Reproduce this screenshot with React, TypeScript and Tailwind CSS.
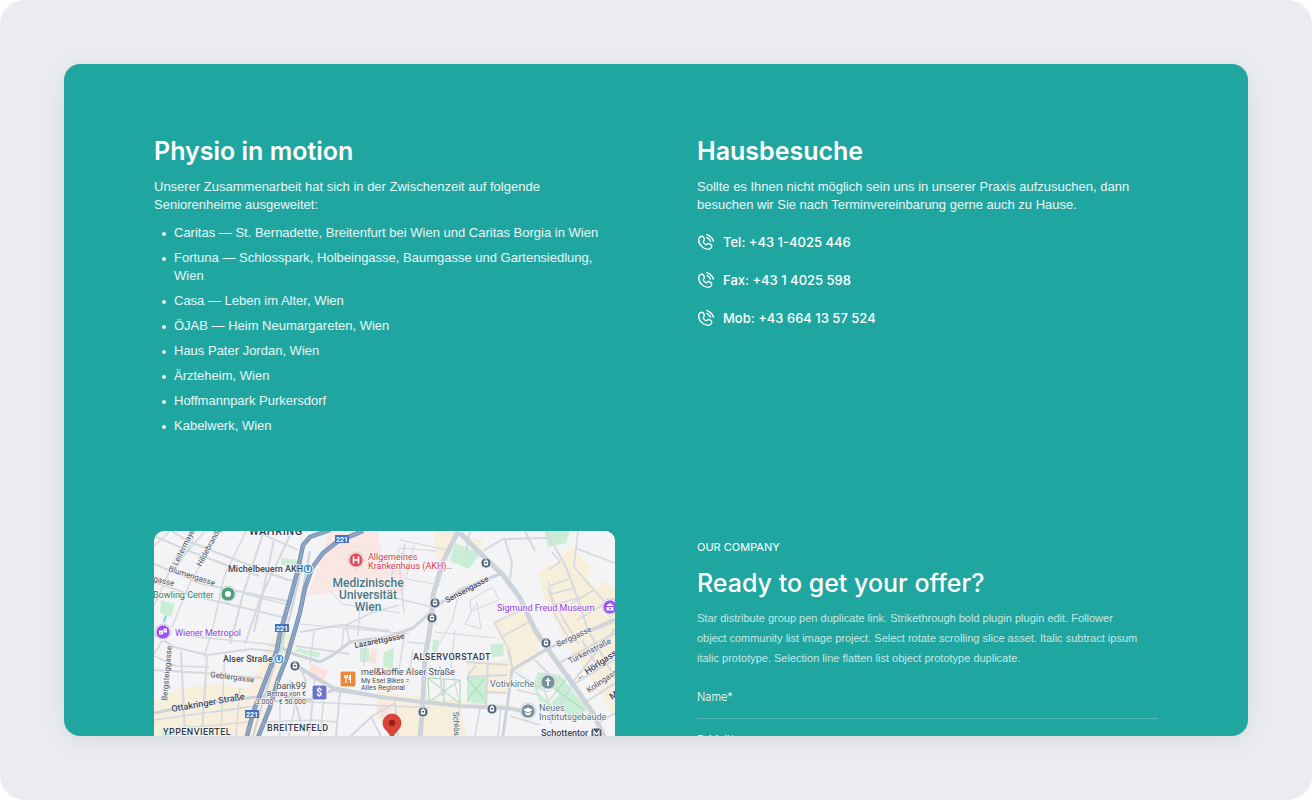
import type { ReactNode } from "react";

const homes = [
  "Caritas — St. Bernadette, Breitenfurt bei Wien und Caritas Borgia in Wien",
  "Fortuna — Schlosspark, Holbeingasse, Baumgasse und Gartensiedlung, Wien",
  "Casa — Leben im Alter, Wien",
  "ÖJAB — Heim Neumargareten, Wien",
  "Haus Pater Jordan, Wien",
  "Ärzteheim, Wien",
  "Hoffmannpark Purkersdorf",
  "Kabelwerk, Wien",
];

const phones = [
  { label: "Tel: +43 1-4025 446", href: "tel:+4314025446" },
  { label: "Fax: +43 1 4025 598", href: "tel:+4314025598" },
  { label: "Mob: +43 664 13 57 524", href: "tel:+436641357524" },
];

const fields = [
  { id: "name", label: "Name*", type: "text" },
  { id: "email", label: "E-Mail*", type: "email" },
];

function PhoneIcon() {
  return (
    <svg viewBox="2 0 22 22" className="size-[18px] shrink-0" fill="none" stroke="currentColor" strokeWidth="1.7" strokeLinecap="round" aria-hidden="true">
      <path d="M14 2s2.2.2 5 3 3 5 3 5M14.2 5.5s1 .3 2.5 1.8 1.8 2.5 1.8 2.5" />
      <path d="M10.04 5.32l.65 1.16c.58 1.05.35 2.43-.57 3.35 0 0-1.12 1.12.91 3.15 2.03 2.03 3.15.91 3.15.91.92-.92 2.3-1.16 3.35-.57l1.16.65c1.58.88 1.77 3.1.38 4.5-.84.83-1.87 1.48-3 1.53-1.9.07-5.15-.41-8.4-3.66-3.25-3.25-3.73-6.5-3.66-8.4.05-1.13.7-2.16 1.53-3 1.4-1.39 3.62-1.2 4.5.38z" />
    </svg>
  );
}

type MapLabel = {
  text: string;
  x: number;
  y: number;
  size: number;
  fill: string;
  rotate?: number;
  weight?: number;
  anchor?: "start" | "middle" | "end";
};

const SLATE = "#46536a";
const DARK = "#3d4656";
const PURPLE = "#8b44e0";

const mapLabels: MapLabel[] = [
  { text: "Leitermayergasse", x: 177, y: 566, size: 8, fill: SLATE, rotate: -63 },
  { text: "Hildebrandgasse", x: 201, y: 567, size: 8, fill: SLATE, rotate: -62 },
  { text: "Blumengasse", x: 168, y: 571, size: 8, fill: SLATE, rotate: 18 },
  { text: "gasse", x: 153, y: 581, size: 8, fill: SLATE, rotate: 14 },
  { text: "Michelbeuern AKH", x: 228, y: 572, size: 9, fill: DARK, weight: 500 },
  { text: "Bowling Center", x: 153, y: 598, size: 9, fill: "#31845c" },
  { text: "Wiener Metropol", x: 175, y: 636, size: 9, fill: PURPLE },
  { text: "Alser Straße", x: 223, y: 662, size: 9, fill: DARK, weight: 500 },
  { text: "Geblergasse", x: 210, y: 677, size: 8, fill: SLATE, rotate: 7 },
  { text: "Bergsteiggasse", x: 167, y: 701, size: 8, fill: SLATE, rotate: -85 },
  { text: "Ottakringer Straße", x: 172, y: 712, size: 9, fill: DARK, rotate: -10, weight: 500 },
  { text: "bank99", x: 306, y: 689, size: 9, fill: "#4d4d52", anchor: "end" },
  { text: "Betrag von €", x: 306, y: 696, size: 7, fill: "#4d4d52", anchor: "end" },
  { text: "3.000 - € 50.000", x: 306, y: 704, size: 7, fill: "#4d4d52", anchor: "end" },
  { text: "Allgemeines", x: 368, y: 560, size: 9, fill: "#d6404a" },
  { text: "Krankenhaus (AKH)…", x: 368, y: 569, size: 9, fill: "#d6404a" },
  { text: "Medizinische", x: 368, y: 587, size: 12, fill: "#4c7583", anchor: "middle", weight: 500 },
  { text: "Universität", x: 368, y: 599, size: 12, fill: "#4c7583", anchor: "middle", weight: 500 },
  { text: "Wien", x: 368, y: 611, size: 12, fill: "#4c7583", anchor: "middle", weight: 500 },
  { text: "Lazarettgasse", x: 355, y: 648, size: 8, fill: DARK, rotate: -11, weight: 500 },
  { text: "Sensengasse", x: 447, y: 603, size: 8, fill: DARK, rotate: -28, weight: 500 },
  { text: "mel&koffie Alser Straße", x: 361, y: 675, size: 9, fill: "#4d4d52" },
  { text: "My Esel Bikes =", x: 361, y: 683, size: 7, fill: "#4d4d52" },
  { text: "Alles Regional", x: 361, y: 690, size: 7, fill: "#4d4d52" },
  { text: "Sigmund Freud Museum", x: 497, y: 611, size: 9, fill: PURPLE },
  { text: "Votivkirche", x: 490, y: 687, size: 9, fill: "#58737c" },
  { text: "Neues", x: 539, y: 711, size: 9, fill: "#58737c" },
  { text: "Institutsgebäude", x: 539, y: 720, size: 9, fill: "#58737c" },
  { text: "Schottentor", x: 541, y: 736, size: 9, fill: DARK, weight: 500 },
  { text: "Berggasse", x: 558, y: 647, size: 8, fill: SLATE, rotate: -25 },
  { text: "Türkenstraße", x: 570, y: 664, size: 8, fill: SLATE, rotate: -27 },
  { text: "← Hörlgasse", x: 578, y: 681, size: 9, fill: DARK, rotate: -34, weight: 500 },
  { text: "Kolingasse", x: 589, y: 693, size: 8, fill: SLATE, rotate: -34 },
  { text: "Maria", x: 612, y: 700, size: 9, fill: DARK, rotate: -34, weight: 500 },
  { text: "Schlösselgasse", x: 453, y: 712, size: 8, fill: SLATE, rotate: 87 },
];

const districtLabels = [
  { text: "WÄHRING", x: 249, y: 535, size: 11 },
  { text: "ALSERVORSTADT", x: 413, y: 660, size: 9 },
  { text: "YPPENVIERTEL", x: 163, y: 735, size: 9 },
  { text: "BREITENFELD", x: 267, y: 731, size: 9 },
];

function Pin({ x, y, color, children }: { x: number; y: number; color: string; children?: ReactNode }) {
  return (
    <g transform={`translate(${x} ${y})`}>
      <path d="M-8 0a8 8 0 1 1 16 0c0 5-5 5.500-8 10-3-4.500-8-5-8-10z" fill="#fff" stroke="#b4bac3" strokeWidth=".7" />
      <circle r="6.700" fill={color} />
      {children}
    </g>
  );
}

function TramStop({ x, y }: { x: number; y: number }) {
  return (
    <g transform={`translate(${x} ${y})`}>
      <circle r="5" fill="#4d6076" stroke="#eef1f4" strokeWidth=".8" />
      <path d="M-1.200-3.200h2.400" stroke="#fff" strokeWidth=".8" />
      <rect x="-2.200" y="-2.400" width="4.400" height="5" rx=".8" fill="#fff" />
      <path d="M-1.200-1h2.400v1.500h-2.400z" fill="#4d6076" />
    </g>
  );
}

function RouteShield({ x, y }: { x: number; y: number }) {
  return (
    <g transform={`translate(${x} ${y})`}>
      <rect x="-7" y="-4" width="14" height="8" fill="#426fc0" />
      <text y="2.500" textAnchor="middle" fontSize="7" fontWeight="700" fill="#fff">221</text>
    </g>
  );
}

function CityMap() {
  return (
    <svg viewBox="154 531 461 340" className="block w-full" fontFamily="Roboto, sans-serif" role="img" aria-label="Karte der Praxis">
      <rect x="154" y="531" width="461" height="340" fill="#f4f3f5" />

      {/* built-up areas */}
      <g fill="#f8eedc">
        <path d="M154 702l26-14 31-4 38 4 29-60 14 6-38 112h-100z" />
        <path d="M434 531h25l-14 30-9-4z" />
        <path d="M463 537l20 3-3 13-12-7z" />
        <path d="M378 692l77 8 58 5v171h-114l-5-135-18-25z" />
        <path d="M467 662l44-2 24-12 8 6-30 20-9 22-37-4z" />
        <path d="M494 621l32-14 17 30-8 13-24 20-6-20z" />
        <path d="M556 562l16-15 9 10 20 22 14 9v130l-8-12-42-65-21-44-6-24z" />
      </g>
      <path d="M565 531h50v53l-20-9-14-21zM590 567l15 7-6 15-12-10z" fill="#f4f3f5" />
      <path d="M460 708h52l30 6 20 22v20h-90z" fill="#f4f3f5" />
      <path d="M330 531h48l3 24 26 18-4 21-39-7-57 9 10-26z" fill="#fae6e3" />
      <path d="M310 663l18 8-5 12-14-4zM377 706l13-3 4 18-13-3zM370 649l7-1-1 16-7-1z" fill="#fae3df" />

      {/* parks */}
      <g fill="#caeed5">
        <path d="M281 558l17 2-1 8-16-3z" />
        <path d="M161 600l14 4-4 13-11-4z" />
        <path d="M282 632l4-1-3 23-6-2z" />
        <path d="M455 543l25 10-11 16-19-8z" />
        <path d="M544 531h26l-4 12-18 4z" />
        <path d="M302 649l18 4-1 5-19-5zM301 647l-7 4 8 2z" />
        <path d="M360 648h9v14h-9z" />
        <path d="M384 652l10-4-1 22-10-4z" />
        <path d="M433 640h6l-2 14-5-3z" />
        <path d="M490 645l13-2 1 13-12 1z" />
        <path d="M467 677l19-1v28l-19-2z" />
        <path d="M538 672l22 3 28 35-14 7-35-16-6-17z" />
        <path d="M435 612l2 14-5-5z" />
        <path d="M161 730l28-5 4 8-30 4z" />
      </g>
      <path d="M537 691l12-9 10 13-9 9z" fill="#f4f3f5" />
      <path d="M428 678l32 2v25l-31-4zl31 25M460 680l-31 22M444 679v24M467 678l18 22M485 678l-18 22M540 678l44 32M570 674l-22 28" fill="none" stroke="#9fd7b2" strokeWidth="1" />
      <path d="M163 621l2-6 2 1-2 7z" fill="#8fd5e8" />

      {/* minor streets */}
      <g fill="none" stroke="#d4d9df" strokeWidth="1.500">
        <path d="M154 536l35 15 40 15 30 10M172 531l14 9 32 13 70 27" strokeWidth="2" />
        <path d="M154 564l48 20 50 10 40 8M154 582l40 14 38 9 58 14" strokeWidth="2" />
        <path d="M220 531l-30 52-18 44M205 531l-36 42-15 33M246 531l-22 46-11 50-9 30" />
        <path d="M264 531l-20 60-14 53M274 540l-9 42-11 50M292 531l-32 68-15 45" strokeWidth="2" />
        <path d="M154 546l16-15M180 550l-14 28M257 570l38 12M245 594l47 12M258 532l40 18M193 540l-18 30" />
        <path d="M154 634l20 13 33 8 45-6 27 3M207 655l-5 80M181 652l4 84M154 670l48 3 60 5" strokeWidth="2" />
        <path d="M154 656l22 10 33 1M170 628l-16 26M225 653l-4 77M154 720l100-14M154 740l30-12 65-6" />
        <path d="M188 636l80 8 14 5M240 688l-4 48M214 712l35-5" />
        <path d="M300 632l42-7 48 6M296 646l54 8M290 680l12 48M299 664l8 20M315 679l-6 57M340 692l-4 44" strokeWidth="2" />
        <path d="M270 700l160 8M262 722l50-2 25 2M280 702v34M296 700l-7 36M325 688l-5 48" />
        <path d="M349 738l22-21 24-14 3 33M371 717l10 19" strokeWidth="2" />
        <path d="M350 643l-4-18 25-12 28-8M360 604l-2 32M404 613l-4-42 5-27M378 594l54 13" />
        <path d="M300 624l110 10M330 590l12 14 58 9M391 578l8-30 37 3M400 540l47 10M414 545l-8 34 35 6" strokeWidth="1" />
        <path d="M314 630l-4 34M344 628l-2 18M366 637l-2 29M405 632l-7 44M378 669l52 4M407 642l22 2M413 650l-4 26" />
        <path d="M460 588l-8 34-17 28M470 600l23-13 6 13-28 11zM465 624l12-22 4 27zM435 632l60 6M455 630l-4 34 8 38" strokeWidth="1" />
        <path d="M470 531l-4 22M483 551l20-12 43-1M505 540l7 22-2 17M525 531l10 20M546 531l19 34 8 20 15 45 27 48" strokeWidth="2" />
        <path d="M578 531l-4 36 20 23 21 23M575 548l40 15M550 586l20-8M548 595l26-7M551 606l30-9M548 570l12-8-8-10M549 582l5 31 14 24" />
        <path d="M547 588l18 34 14 22M594 590l-23 14M495 622l38-17M494 622l15 28 4 20M503 636l28-15M577 620l38-22M590 632l25-10" />
        <path d="M440 666l2 30M466 662l42 3M467 677l40-2M488 660l-2 45M508 650l5 20M476 665l-9 12M486 692l20 1" strokeWidth="2" />
        <path d="M460 707l-4 29M480 708l-5 28M501 708l-3 28M510 716l30 9M517 690l22 5M513 671l32 20 8 30" />
        <path d="M535 660l13 13M550 724l25-45 40-50M559 663l56-30M574 684l41-25M586 702l29-19M600 722l15-9M582 640l14 24" strokeWidth="2" />
      </g>

      {/* main streets */}
      <g fill="none" stroke="#cdd3da">
        <path d="M458 531l-15 31-10 33-1 17-3 23-4 22-2 40-3 45" strokeWidth="5" />
        <path d="M460 533l20 20 23 22 17 23 15 32 12 18 23 32 23 33 14 30" strokeWidth="5" />
        <path d="M300 668l33 20 47 9 43 5 37 4 47 2 22 4" strokeWidth="4" />
        <path d="M432 611l-19 17-25 9-38 5-17 13-13 7-26-8-20-10" strokeWidth="3" />
        <path d="M433 608l29-19 38-15M547 649l-35 21-5 37-5 35M547 649l68-30" strokeWidth="3" />
        <path d="M154 713l50-10 70-8 35 5 24-10 50 7" strokeWidth="3" />
        <path d="M302 566l-12 50-23 72-14 48M310 551l-9 48" strokeWidth="2" />
      </g>
      <path d="M330 530l-20 7-7 8-5 24-6 23-12 41-3 17-24 63-7 27M363 531l-26 11-14 11-11 15-7 20-5 24-5 18-8 27-9 23-8 27-13 33" fill="none" stroke="#718baf" strokeWidth="4.500" />
      <path d="M330 530l-20 7-7 8-5 24-6 23-12 41-3 17-24 63-7 27M363 531l-26 11-14 11-11 15-7 20-5 24-5 18-8 27-9 23-8 27-13 33" fill="none" stroke="#8ba3c5" strokeWidth="3" />

      <g stroke="#f7f7f8" strokeWidth="1.500" strokeLinejoin="round" className="[paint-order:stroke]">
        {mapLabels.map((l) => (
          <text
            key={l.text}
            transform={`translate(${l.x} ${l.y}) rotate(${l.rotate ?? 0})`}
            fontSize={l.size}
            fill={l.fill}
            fontWeight={l.weight ?? 400}
            textAnchor={l.anchor ?? "start"}
          >
            {l.text}
          </text>
        ))}
        {districtLabels.map((l) => (
          <text key={l.text} x={l.x} y={l.y} fontSize={l.size} fill="#333b47" fontWeight="500" className="tracking-wider">
            {l.text}
          </text>
        ))}
      </g>

      <RouteShield x={342} y={539} />
      <RouteShield x={282} y={628} />
      <RouteShield x={252} y={714} />

      {[{ x: 308, y: 569 }, { x: 279, y: 659 }].map((s) => (
        <g key={s.x} transform={`translate(${s.x} ${s.y})`}>
          <circle r="5" fill="#4b91d3" stroke="#fff" strokeWidth="1" />
          <path d="M-2-2.500v3a2 2 0 0 0 4 0v-3" fill="none" stroke="#fff" strokeWidth="1.400" />
        </g>
      ))}

      <TramStop x={435} y={603} />
      <TramStop x={432} y={618} />
      <TramStop x={486} y={563} />
      <TramStop x={295} y={666} />
      <TramStop x={546} y={643} />
      <TramStop x={423} y={712} />
      <TramStop x={492} y={709} />

      <Pin x={228} y={594} color="#48a278">
        <circle r="3" fill="#fff" />
      </Pin>
      <Pin x={163} y={632} color="#9b55ee">
        <path d="M-4-1.500h4v4h-4zM.500-3.500h3.500v4H.500z" fill="#fff" />
        <path d="M-3 .500q1 1.500 2 0M1.500-1.500q.700-1 1.500 0" stroke="#9b55ee" strokeWidth=".6" fill="none" />
      </Pin>
      <Pin x={356} y={560} color="#e44d58">
        <path d="M-2.500-3.500v7m5-7v7m-5-3.500h5" stroke="#fff" strokeWidth="1.600" />
      </Pin>
      <Pin x={610} y={607} color="#9b55ee">
        <path d="M-4-1l4-3 4 3zM-3.500 0h7v3.500h-7z" fill="#fff" />
        <circle cy="1.500" r="1" fill="#9b55ee" />
      </Pin>
      <Pin x={548} y={682} color="#76909b">
        <path d="M0-4v8M-2.500-1.500h5" stroke="#fff" strokeWidth="1.600" />
      </Pin>
      <Pin x={528} y={711} color="#76909b">
        <path d="M-5-1l5-2.500 5 2.500-5 2.500zM-3 1v2l3 1.500 3-1.500v-2l-3 1.500z" fill="#fff" />
      </Pin>

      <rect x="340" y="671" width="16" height="16" rx="2" fill="#ee8736" stroke="#fff" strokeWidth="1" />
      <path d="M344.500 675v2.500h3V675m-1.500 0v8m4.500 0v-8c-1.500 1-1.500 3-1.500 4.500h1.500" fill="none" stroke="#fff" strokeWidth="1.100" />
      <rect x="312" y="685" width="15" height="15" rx="2" fill="#6b73cb" stroke="#fff" strokeWidth="1" />
      <text x="319" y="696" fontSize="10" fontWeight="700" fill="#fff" textAnchor="middle">$</text>
      <rect x="591" y="728" width="11" height="11" rx="3" fill="#4d6076" stroke="#fff" strokeWidth=".8" />
      <path d="M594 736v-5l2.500 3.500 2.500-3.500v5" fill="none" stroke="#fff" strokeWidth="1.200" />

      <path d="M383 723a9 9 0 1 1 18 0c0 7-7 8-9 17-2-9-9-10-9-17z" fill="#dc4437" stroke="#ad3027" strokeWidth=".7" />
      <circle cx="392" cy="723" r="3.300" fill="#972018" />
    </svg>
  );
}

export default function App() {
  return (
    <div className="bg-white">
      <div className="h-screen rounded-3xl bg-[#eaecf0] p-16 font-['Inter',sans-serif]">
        <main className="h-full overflow-hidden rounded-2xl bg-[#20a6a0] px-[90px] pt-[70px] text-white shadow-[0_4px_24px_rgba(0,0,0,0.08)]">
          <div className="grid grid-cols-2 gap-x-[82px] gap-y-24">
            <section>
              <h2 className="text-[25px] leading-[34px] font-semibold">Physio in motion</h2>
              <p className="mt-[10px] font-['Liberation_Sans',sans-serif] text-[13px] leading-[18px] text-white/90">
                Unserer Zusammenarbeit hat sich in der Zwischenzeit auf folgende Seniorenheime ausgeweitet:
              </p>
              <ul className="mt-[10px] flex list-none flex-col gap-[7px] font-['Liberation_Sans',sans-serif] text-[13px] leading-[18px] text-white/90">
                {homes.map((home) => (
                  <li key={home} className="flex gap-2 pl-2">
                    <span className="mt-2 size-1 shrink-0 rounded-full bg-white/90" />
                    <span>{home}</span>
                  </li>
                ))}
              </ul>
            </section>

            <section>
              <h2 className="text-[25px] leading-[34px] font-semibold">Hausbesuche</h2>
              <p className="mt-[10px] font-['Liberation_Sans',sans-serif] text-[13px] leading-[18px] text-white/90">
                Sollte es Ihnen nicht möglich sein uns in unserer Praxis aufzusuchen, dann besuchen wir Sie nach Terminvereinbarung gerne auch zu Hause.
              </p>
              <ul className="mt-[18px] flex flex-col gap-[18px]">
                {phones.map((phone) => (
                  <li key={phone.label}>
                    <a href={phone.href} className="flex items-center gap-2 text-[13px] leading-5 font-medium">
                      <PhoneIcon />
                      {phone.label}
                    </a>
                  </li>
                ))}
              </ul>
            </section>

            <div className="self-start overflow-hidden rounded-[10px]">
              <CityMap />
            </div>

            <section className="pt-2">
              <p className="text-[11px] leading-4">OUR COMPANY</p>
              <h2 className="mt-[11px] text-[25px] leading-[34px] font-medium">Ready to get your offer?</h2>
              <p className="mt-2 pr-4 font-['Liberation_Sans',sans-serif] text-[11px] leading-5 text-white/75">
                Star distribute group pen duplicate link. Strikethrough bold plugin plugin edit. Follower object community list image project. Select rotate scrolling slice asset. Italic subtract ipsum italic prototype. Selection line flatten list object prototype duplicate.
              </p>
              <form className="mt-2">
                {fields.map((field) => (
                  <div key={field.id}>
                    <label htmlFor={field.id} className="sr-only">{field.label}</label>
                    <input
                      id={field.id}
                      type={field.type}
                      placeholder={field.label}
                      className="block h-[43px] w-full border-b border-white/20 bg-transparent text-[11px] font-light text-white placeholder:text-white focus:outline-none"
                    />
                  </div>
                ))}
              </form>
            </section>
          </div>
        </main>
      </div>
    </div>
  );
}
